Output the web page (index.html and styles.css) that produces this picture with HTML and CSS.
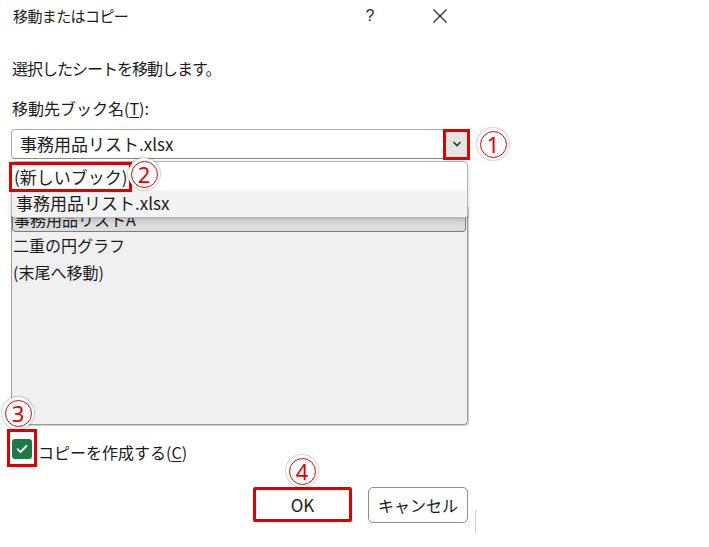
FILE: index.html
```html
<!DOCTYPE html>
<html lang="ja">
<head>
<meta charset="utf-8">
<title>移動またはコピー</title>
<link rel="stylesheet" href="styles.css">
</head>
<body>
<div class="dialog">
  <div class="titlebar">
    <div class="title">移動またはコピー</div>
    <div class="help">?</div>
    <div class="close">
      <svg width="16" height="16" viewBox="0 0 16 16"><path d="M1.5 1.5 L14.5 14.5 M14.5 1.5 L1.5 14.5" stroke="#2b2b2b" stroke-width="1.3" fill="none"/></svg>
    </div>
  </div>
  <div class="content">
    <div class="msg">選択したシートを移動します。</div>
    <div class="label">移動先ブック名(<u>T</u>):</div>
    <div class="combo-wrap">
      <div class="combo">
        <span class="combo-text">事務用品リスト.xlsx</span>
        <span class="dd-btn">
          <svg width="10" height="6" viewBox="0 0 10 6"><path d="M1.5 1 L5 4.5 L8.5 1" stroke="#333" stroke-width="1.6" fill="none"/></svg>
        </span>
      </div>
      <div class="num num1"><span>1</span></div>
      <div class="popup">
        <div class="pitem pitem-first"><span class="hl">(新しいブック)</span></div>
        <div class="pitem pitem-hover">事務用品リスト.xlsx</div>
      </div>
      <div class="num num2"><span>2</span></div>
    </div>
    <div class="listbox">
      <div class="litem selected">事務用品リストA</div>
      <div class="litem">二重の円グラフ</div>
      <div class="litem">(末尾へ移動)</div>
    </div>
    <div class="check-row">
      <div class="cb-wrap">
        <span class="cb">
          <svg width="12" height="10" viewBox="0 0 12 10"><path d="M1.5 5.2 L4.5 8 L10.5 2" stroke="#fff" stroke-width="1.8" fill="none" stroke-linecap="round" stroke-linejoin="round"/></svg>
        </span>
        <div class="num num3"><span>3</span></div>
      </div>
      <div class="cb-label">コピーを作成する(<u>C</u>)</div>
    </div>
    <div class="buttons">
      <div class="btn-ok-wrap">
        <div class="num num4"><span>4</span></div>
        <button class="btn btn-ok">OK</button>
      </div>
      <button class="btn btn-cancel">キャンセル</button>
      <span class="edge-line"></span>
    </div>
  </div>
</div>
</body>
</html>
```
FILE: styles.css
```css
* { box-sizing: border-box; }
html, body {
  margin: 0;
  padding: 0;
  background: #fff;
}
body {
  width: 709px;
  height: 547px;
  overflow: hidden;
  font-family: "Noto Sans CJK JP", "Noto Sans", sans-serif;
  color: #1b1b1b;
}
.dialog {
  width: 709px;
  height: 547px;
}
.titlebar {
  height: 32px;
  display: flex;
  align-items: center;
  padding-left: 13px;
}
.title {
  width: 337px;
  font-size: 15px;
  letter-spacing: -0.6px;
  line-height: 20px;
}
.help {
  width: 40px;
  text-align: center;
  font-family: "Liberation Sans", sans-serif;
  font-size: 16px;
  color: #2b2b2b;
}
.close {
  width: 40px;
  margin-left: 30px;
  display: flex;
  justify-content: center;
}
.content {
  padding-left: 12px;
}
.msg {
  margin-top: 25px;
  font-size: 16px;
  letter-spacing: -1px;
  line-height: 22px;
}
.label {
  margin-top: 18px;
  font-size: 16px;
  line-height: 22px;
}
.label u, .cb-label u {
  text-underline-offset: 2px;
}
.combo-wrap {
  position: relative;
  margin-top: 10px;
  margin-left: -1px;
  width: 457px;
}
.combo {
  height: 30px;
  border: 1px solid #a9a9a9;
  border-bottom-color: #8a8a8a;
  border-radius: 4px;
  background: #fff;
  display: flex;
  align-items: center;
  justify-content: space-between;
  padding-left: 8px;
}
.combo-text {
  font-size: 17px;
  line-height: 24px;
}
.dd-btn {
  width: 21px;
  height: 25px;
  background: #e4e4e4;
  outline: 3px solid #e00000;
  display: flex;
  align-items: center;
  justify-content: center;
}
.num {
  position: absolute;
  width: 32px;
  height: 32px;
  border-radius: 50%;
  background: #fff;
  box-shadow: 0 0 1px 1px rgba(0,0,0,0.18);
  display: flex;
  align-items: center;
  justify-content: center;
  z-index: 5;
}
.num span {
  width: 27px;
  height: 27px;
  border: 1.5px solid #e60000;
  border-radius: 50%;
  color: #e60000;
  font-family: "Noto Sans", sans-serif;
  font-weight: 400;
  font-size: 22px;
  line-height: 24px;
  text-align: center;
}
.num1 { left: 466px; top: -1px; }
.num2 { left: 117px; top: 29px; }
.num3 { left: -8px; top: -35px; }
.num4 { left: 33px; top: -32px; }
.popup {
  position: absolute;
  top: 32px;
  left: 0;
  width: 457px;
  border: 1px solid #b3b3b3;
  border-radius: 4px;
  background: #fff;
  box-shadow: 0 2px 5px rgba(0,0,0,0.18);
  z-index: 3;
  overflow: visible;
}
.pitem {
  font-size: 17px;
  line-height: 24px;
}
.pitem-first {
  height: 28px;
  display: flex;
  align-items: flex-start;
}
.hl {
  position: relative;
  z-index: 1;
  display: inline-block;
  height: 30px;
  margin-left: -3px;
  padding: 0 1px 0 2px;
  border: 3px solid #e00000;
  line-height: 24px;
  color: #202020;
}
.pitem-hover {
  height: 27px;
  background: #f3f3f3;
  padding-left: 4px;
  padding-top: 1px;
  border-radius: 0 0 3px 3px;
}
.listbox {
  margin-top: 45px;
  margin-left: -1px;
  width: 457px;
  height: 221px;
  background: #f0f0f0;
  border: 1px solid #9c9c9c;
  border-radius: 4px;
  box-shadow: 1px 1px 0 #cfcfcf;
  font-size: 16px;
}
.litem {
  height: 27px;
  line-height: 27px;
  padding-left: 1px;
}
.litem.selected {
  height: 26px;
  line-height: 24px;
  background: #dcdcdc;
  border: 1px solid #7d7d7d;
  border-top-color: #cfcfcf;
  border-radius: 4px;
  margin: 1px 1px 0 0;
}
.check-row {
  margin-top: 4px;
  display: flex;
  align-items: flex-start;
}
.cb-wrap {
  position: relative;
  width: 30px;
  height: 38px;
  margin-left: -5px;
  border: 3px solid #e00000;
  display: flex;
  align-items: center;
  justify-content: center;
}
.cb {
  width: 20px;
  height: 20px;
  border-radius: 3px;
  background: #1c7a45;
  display: flex;
  align-items: center;
  justify-content: center;
  margin-top: 2px;
}
.cb-label {
  margin-left: 1px;
  margin-top: 12px;
  font-size: 16px;
  line-height: 22px;
}
.buttons {
  position: relative;
  margin-top: 20px;
  margin-left: -1px;
  width: 457px;
  display: flex;
  justify-content: flex-end;
  gap: 16px;
}
.btn-ok-wrap {
  position: relative;
}
.btn {
  font-family: "Noto Sans CJK JP", "Noto Sans", sans-serif;
  font-size: 16px;
  color: #1b1b1b;
  padding: 0;
  margin: 0;
  display: flex;
  align-items: center;
  justify-content: center;
}
.btn-ok {
  width: 99px;
  height: 35px;
  border: 3px solid #e00000;
  border-radius: 2px;
  background: #fff;
  font-size: 17px;
}
.btn-cancel {
  width: 100px;
  height: 36px;
  border: 1px solid #8e8e8e;
  border-radius: 5px;
  background: #fdfdfd;
}
.edge-line {
  position: absolute;
  left: 464px;
  top: 23px;
  width: 1px;
  height: 23px;
  background: #d0d0d0;
}
```
